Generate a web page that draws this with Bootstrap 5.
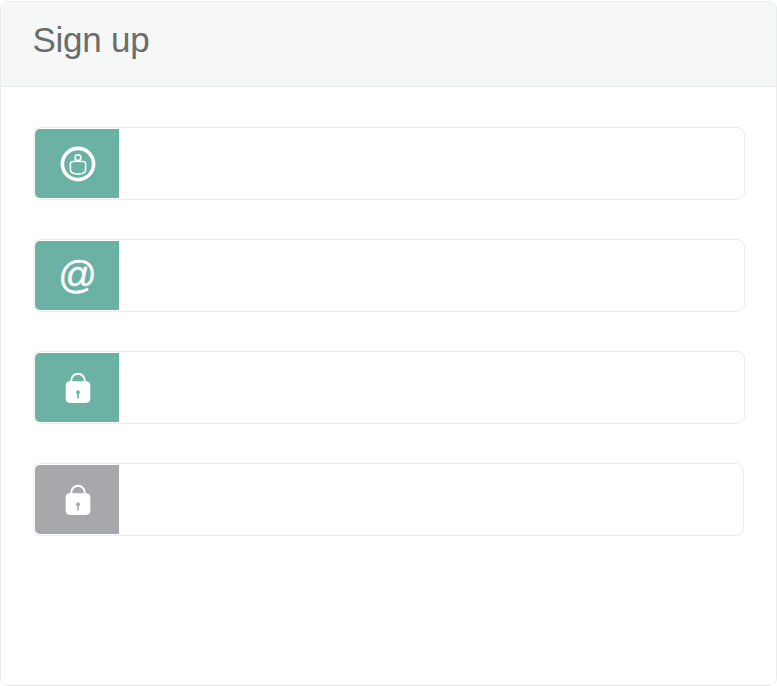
<!DOCTYPE html>
<html lang="en">
<head>
<meta charset="utf-8">
<meta name="viewport" content="width=device-width, initial-scale=1">
<title>Sign up</title>
<link href="https://cdn.jsdelivr.net/npm/bootstrap@5.3.0/dist/css/bootstrap.min.css" rel="stylesheet">
<style>
body{font-family:"Liberation Sans",Arial,sans-serif;background:#fff;height:686px;overflow:hidden}
.signup-card{height:685px;margin-top:1px;border:1px solid #ececec;border-radius:8px;overflow:hidden}
.signup-card .card-header{height:85px;padding:0 31.500px;background:#f6f8f7;border-bottom:1px solid #e9ebea}
.signup-title{font-size:35px;line-height:76px;color:#6b6d6d;letter-spacing:-.25px}
.signup-card .card-body{padding:40px 31px 0 32px}
.signup-form{gap:39px}
.field{height:73px;border:1px solid #ebebeb;border-radius:8px;padding:.6px 1px;background:#fff}
.field-confirm{margin-right:1px}
.field .input-group-text{width:84.400px;height:69.600px;padding:1.400px 0 0 .8px;border:0;border-radius:5px 0 0 5px;background:#6bb1a4;color:#fff}
.field-confirm .input-group-text{background:#a7a8ac}
.field .form-control{border:0;background:transparent;box-shadow:none}
.at-sign{font-size:38px;line-height:36px;margin-top:-3px;-webkit-text-stroke:.4px #fff}
</style>
</head>
<body>
<main class="card signup-card">
  <div class="card-header"><h1 class="signup-title m-0 fw-normal">Sign up</h1></div>
  <div class="card-body">
    <form class="signup-form d-flex flex-column">
      <div class="input-group field flex-nowrap">
        <span class="input-group-text justify-content-center">
          <svg width="36" height="36" viewBox="0 0 36 36" fill="none" stroke="#fff">
            <circle cx="18" cy="18" r="15.6" stroke-width="3.6"/>
            <circle cx="18" cy="11.700" r="2.900" stroke-width="1.6"/>
            <path d="M14.500 15.500h-1.700q-2.400 0-2.400 2.200v5.800q0 2.400 1.700 3.200 5.900 2.800 11.800 0 1.700-.8 1.700-3.200v-5.800q0-2.200-2.400-2.200h-1.700q-3.500-.5-7 0z" stroke-width="1.6"/>
          </svg>
        </span>
        <input type="text" class="form-control" aria-label="Name">
      </div>
      <div class="input-group field flex-nowrap">
        <span class="input-group-text justify-content-center"><span class="at-sign">@</span></span>
        <input type="email" class="form-control" aria-label="Email">
      </div>
      <div class="input-group field flex-nowrap">
        <span class="input-group-text justify-content-center">
          <svg width="26" height="32" viewBox="0 0 26 32">
            <path d="M6.300 11V8.500a6.700 6.700 0 0 1 13.400 0V11" fill="none" stroke="#fff" stroke-width="2"/>
            <path fill="#fff" fill-rule="evenodd" d="M5 9.300h16q4.300 0 4.300 4.300v13q0 4.300-4.300 4.300H5q-4.300 0-4.300-4.300v-13Q.7 9.300 5 9.300zM13 18.300a2 2 0 0 0-.8 3.800v4.400h1.600v-4.400a2 2 0 0 0-.8-3.800z"/>
          </svg>
        </span>
        <input type="password" class="form-control" aria-label="Password">
      </div>
      <div class="input-group field field-confirm flex-nowrap w-auto">
        <span class="input-group-text justify-content-center">
          <svg width="26" height="32" viewBox="0 0 26 32">
            <path d="M6.300 11V8.500a6.700 6.700 0 0 1 13.400 0V11" fill="none" stroke="#fff" stroke-width="2"/>
            <path fill="#fff" fill-rule="evenodd" d="M5 9.300h16q4.300 0 4.300 4.300v13q0 4.300-4.300 4.300H5q-4.300 0-4.300-4.300v-13Q.7 9.300 5 9.300zM13 18.300a2 2 0 0 0-.8 3.800v4.400h1.600v-4.400a2 2 0 0 0-.8-3.800z"/>
          </svg>
        </span>
        <input type="password" class="form-control" aria-label="Confirm password">
      </div>
    </form>
  </div>
</main>
<script src="https://cdn.jsdelivr.net/npm/bootstrap@5.3.0/dist/js/bootstrap.bundle.min.js"></script>
</body>
</html>
